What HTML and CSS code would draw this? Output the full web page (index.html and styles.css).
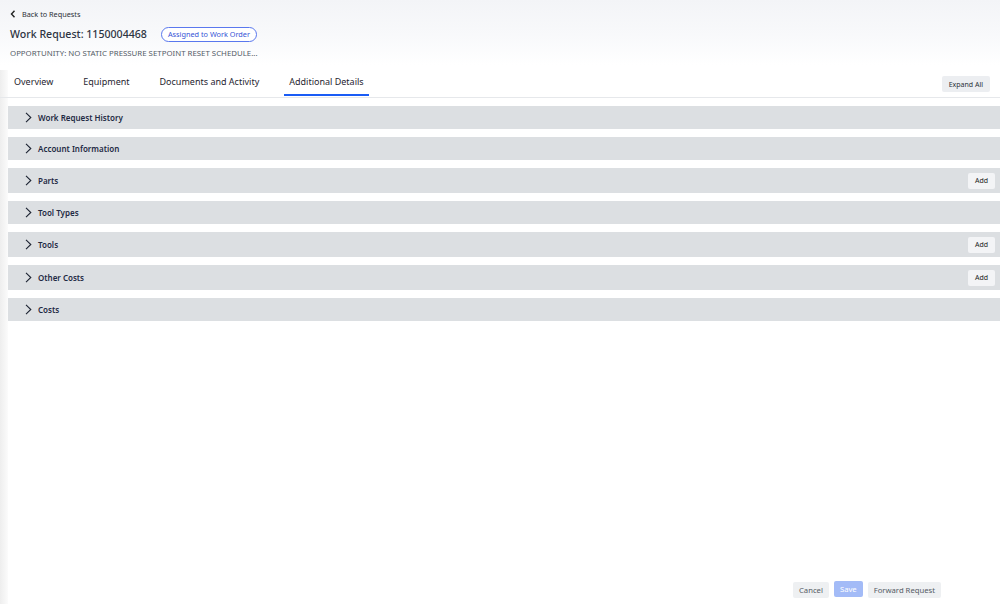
FILE: index.html
```html
<!DOCTYPE html>
<html lang="en">
<head>
<meta charset="utf-8">
<title>Work Request 1150004468</title>
<link rel="stylesheet" href="styles.css">
</head>
<body>
<div class="page">
  <header class="header">
    <a class="back" href="#">
      <svg class="back-icon" width="6" height="8" viewBox="0 0 6 8"><path d="M4.5 0.8 L1.5 4 L4.5 7.2" fill="none" stroke="#222" stroke-width="1.4"/></svg>
      <span>Back to Requests</span>
    </a>
    <div class="title-row">
      <h1 class="title">Work Request: 1150004468</h1>
      <span class="badge">Assigned to Work Order</span>
    </div>
    <div class="subtitle">OPPORTUNITY: NO STATIC PRESSURE SETPOINT RESET SCHEDULE...</div>
  </header>

  <nav class="tabs">
    <div class="tab-list">
      <span class="tab">Overview</span>
      <span class="tab">Equipment</span>
      <span class="tab">Documents and Activity</span>
      <span class="tab tab-active">Additional Details</span>
    </div>
    <button class="btn-light expand">Expand All</button>
  </nav>

  <main class="content">
    <section class="panel">
      <svg class="chev" width="7" height="11" viewBox="0 0 7 11"><path d="M1 0.8 L5.8 5.5 L1 10.2" fill="none" stroke="#1d2433" stroke-width="1.1"/></svg>
      <span class="panel-title">Work Request History</span>
    </section>
    <section class="panel">
      <svg class="chev" width="7" height="11" viewBox="0 0 7 11"><path d="M1 0.8 L5.8 5.5 L1 10.2" fill="none" stroke="#1d2433" stroke-width="1.1"/></svg>
      <span class="panel-title">Account Information</span>
    </section>
    <section class="panel panel-action">
      <svg class="chev" width="7" height="11" viewBox="0 0 7 11"><path d="M1 0.8 L5.8 5.5 L1 10.2" fill="none" stroke="#1d2433" stroke-width="1.1"/></svg>
      <span class="panel-title">Parts</span>
      <button class="add">Add</button>
    </section>
    <section class="panel">
      <svg class="chev" width="7" height="11" viewBox="0 0 7 11"><path d="M1 0.8 L5.8 5.5 L1 10.2" fill="none" stroke="#1d2433" stroke-width="1.1"/></svg>
      <span class="panel-title">Tool Types</span>
    </section>
    <section class="panel panel-action">
      <svg class="chev" width="7" height="11" viewBox="0 0 7 11"><path d="M1 0.8 L5.8 5.5 L1 10.2" fill="none" stroke="#1d2433" stroke-width="1.1"/></svg>
      <span class="panel-title">Tools</span>
      <button class="add">Add</button>
    </section>
    <section class="panel panel-action">
      <svg class="chev" width="7" height="11" viewBox="0 0 7 11"><path d="M1 0.8 L5.8 5.5 L1 10.2" fill="none" stroke="#1d2433" stroke-width="1.1"/></svg>
      <span class="panel-title">Other Costs</span>
      <button class="add">Add</button>
    </section>
    <section class="panel">
      <svg class="chev" width="7" height="11" viewBox="0 0 7 11"><path d="M1 0.8 L5.8 5.5 L1 10.2" fill="none" stroke="#1d2433" stroke-width="1.1"/></svg>
      <span class="panel-title">Costs</span>
    </section>
  </main>

  <footer class="footer">
    <button class="btn-foot">Cancel</button>
    <button class="btn-foot btn-save">Save</button>
    <button class="btn-foot">Forward Request</button>
  </footer>
</div>
</body>
</html>
```

FILE: styles.css
```css
* { box-sizing: border-box; }
html, body { margin: 0; padding: 0; }
body {
  font-family: "Noto Sans", "Open Sans", sans-serif;
  color: #1f2937;
  background: #fff;
}
.page {
  min-height: 100vh;
  display: flex;
  flex-direction: column;
  background:
    linear-gradient(to right, #eeeeee 0, #f6f6f6 5px, #fbfbfb 8px, rgba(255,255,255,0) 8px) no-repeat,
    #fff;
}
.header {
  padding: 8px 10px 0 10px;
  background: linear-gradient(to bottom, #f3f4f7 0, #f8f9fb 35px, #ffffff 65px);
  height: 70px;
}
.back {
  display: flex;
  align-items: center;
  gap: 6px;
  height: 12px;
  font-size: 7.3px;
  color: #2b2f36;
  text-decoration: none;
}
.back-icon { display: block; }
.title-row {
  display: flex;
  align-items: center;
  gap: 14px;
  margin-top: 5px;
  height: 18px;
}
.title {
  margin: 0;
  font-size: 10.6px;
  font-weight: 500;
  color: #2d3442;
  line-height: 18px;
}
.badge {
  font-size: 7.3px;
  color: #3553d6;
  border: 1px solid #5a78ee;
  border-radius: 8px;
  padding: 0 6px;
  height: 15px;
  line-height: 13px;
  background: #fff;
}
.subtitle {
  margin-top: 5px;
  font-size: 7.85px;
  line-height: 10px;
  color: #545b66;
}
.tabs {
  display: flex;
  justify-content: space-between;
  align-items: flex-start;
  padding: 0 10px 1px 9px;
  border-bottom: 1px solid #e6e8eb;
}
.tab-list {
  display: flex;
  gap: 20px;
}
.tab {
  font-size: 9px;
  line-height: 12px;
  padding: 6px 5px 6px 5px;
  color: #1f2530;
  border-bottom: 2px solid transparent;
}
.tab-active { border-bottom-color: #1a5cf5; }
button { font-family: inherit; cursor: pointer; }
.btn-light {
  border: none;
  border-radius: 2px;
  background: #eceef1;
  color: #2b3038;
  font-size: 7px;
  height: 16px;
  padding: 0 7px;
}
.expand { margin-top: 6px; }
.content {
  padding: 8px 0 0 8px;
  display: flex;
  flex-direction: column;
  gap: 8px;
}
.panel {
  display: flex;
  align-items: center;
  height: 23px;
  background: #dcdfe2;
  padding: 0 5px 0 17px;
}
.panel-action { height: 25px; }
.chev { display: block; flex: none; }
.panel-title {
  margin-left: 6px;
  font-size: 8px;
  font-weight: 600;
  color: #1f2a44;
}
.add {
  margin-left: auto;
  border: none;
  border-radius: 2px;
  background: #f3f4f6;
  color: #1a1a1a;
  font-size: 7px;
  height: 16px;
  padding: 0 7px;
}
.footer {
  margin-top: auto;
  display: flex;
  justify-content: flex-end;
  gap: 5px;
  padding: 0 59px 6px 0;
}
.btn-foot {
  border: none;
  border-radius: 2px;
  background: #eef0f2;
  color: #555b64;
  font-size: 7.7px;
  height: 16px;
  padding: 0 6px;
}
.btn-save {
  background: #a3bbf7;
  color: #fff;
  position: relative;
  top: -1px;
}
```
